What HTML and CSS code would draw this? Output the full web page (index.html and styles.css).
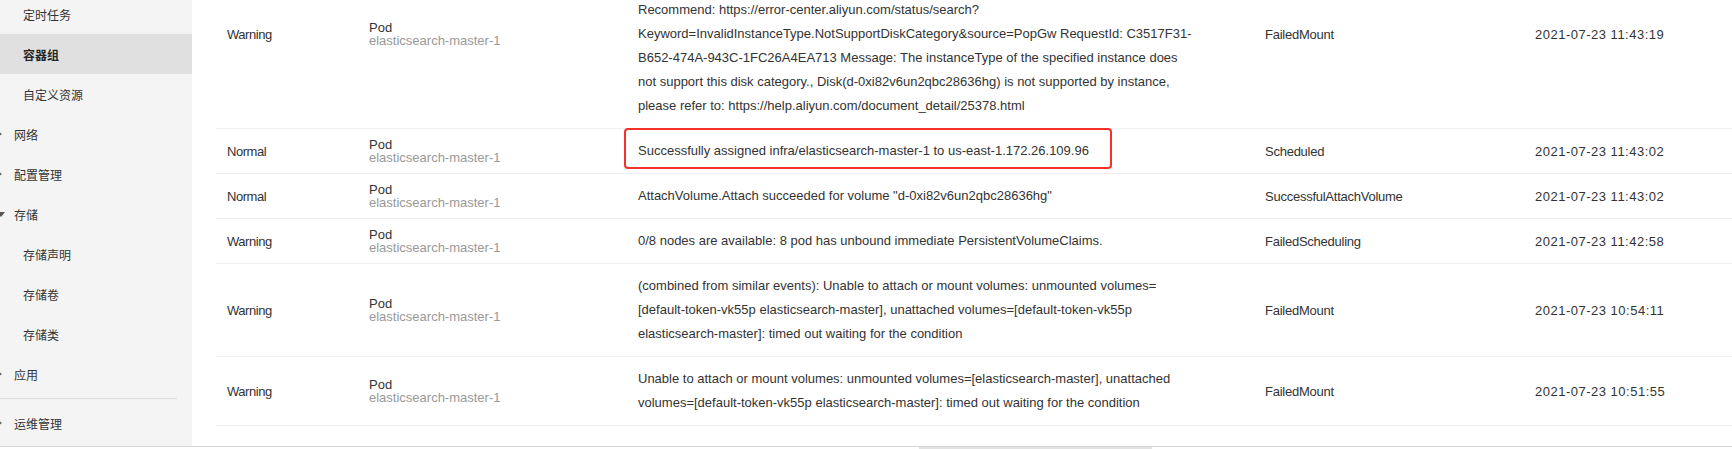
FILE: index.html
```html
<!DOCTYPE html>
<html lang="zh-CN">
<head>
<meta charset="utf-8">
<title>容器组 - 事件</title>
<link rel="stylesheet" href="styles.css">
</head>
<body>
<div class="app">
  <aside class="sidebar">
    <ul class="nav">
      <li class="nav-item sub">定时任务</li>
      <li class="nav-item sub active">容器组</li>
      <li class="nav-item sub">自定义资源</li>
      <li class="nav-item top"><span class="caret-right"></span>网络</li>
      <li class="nav-item top"><span class="caret-right"></span>配置管理</li>
      <li class="nav-item top"><span class="caret-down"></span>存储</li>
      <li class="nav-item sub">存储声明</li>
      <li class="nav-item sub">存储卷</li>
      <li class="nav-item sub">存储类</li>
      <li class="nav-item top"><span class="caret-right"></span>应用</li>
      <li class="nav-divider"></li>
      <li class="nav-item top"><span class="caret-right"></span>运维管理</li>
    </ul>
  </aside>
  <main class="main">
    <table class="events">
      <colgroup>
        <col class="c-type"><col class="c-obj"><col class="c-msg"><col class="c-reason"><col class="c-time">
      </colgroup>
      <tbody>
        <tr>
          <td class="type">Warning</td>
          <td class="obj"><div class="kind">Pod</div><div class="name">elasticsearch-master-1</div></td>
          <td class="msg scrolled">Recommend: https://error-center.aliyun.com/status/search?<br>Keyword=InvalidInstanceType.NotSupportDiskCategory&amp;source=PopGw RequestId: C3517F31-<br>B652-474A-943C-1FC26A4EA713 Message: The instanceType of the specified instance does<br>not support this disk category., Disk(d-0xi82v6un2qbc28636hg) is not supported by instance,<br>please refer to: https://help.aliyun.com/document_detail/25378.html</td>
          <td class="reason">FailedMount</td>
          <td class="time">2021-07-23 11:43:19</td>
        </tr>
        <tr>
          <td class="type">Normal</td>
          <td class="obj"><div class="kind">Pod</div><div class="name">elasticsearch-master-1</div></td>
          <td class="msg highlighted">Successfully assigned infra/elasticsearch-master-1 to us-east-1.172.26.109.96<span class="mark"></span></td>
          <td class="reason">Scheduled</td>
          <td class="time">2021-07-23 11:43:02</td>
        </tr>
        <tr>
          <td class="type">Normal</td>
          <td class="obj"><div class="kind">Pod</div><div class="name">elasticsearch-master-1</div></td>
          <td class="msg">AttachVolume.Attach succeeded for volume "d-0xi82v6un2qbc28636hg"</td>
          <td class="reason">SuccessfulAttachVolume</td>
          <td class="time">2021-07-23 11:43:02</td>
        </tr>
        <tr>
          <td class="type">Warning</td>
          <td class="obj"><div class="kind">Pod</div><div class="name">elasticsearch-master-1</div></td>
          <td class="msg">0/8 nodes are available: 8 pod has unbound immediate PersistentVolumeClaims.</td>
          <td class="reason">FailedScheduling</td>
          <td class="time">2021-07-23 11:42:58</td>
        </tr>
        <tr>
          <td class="type">Warning</td>
          <td class="obj"><div class="kind">Pod</div><div class="name">elasticsearch-master-1</div></td>
          <td class="msg">(combined from similar events): Unable to attach or mount volumes: unmounted volumes=<br>[default-token-vk55p elasticsearch-master], unattached volumes=[default-token-vk55p<br>elasticsearch-master]: timed out waiting for the condition</td>
          <td class="reason">FailedMount</td>
          <td class="time">2021-07-23 10:54:11</td>
        </tr>
        <tr>
          <td class="type">Warning</td>
          <td class="obj"><div class="kind">Pod</div><div class="name">elasticsearch-master-1</div></td>
          <td class="msg">Unable to attach or mount volumes: unmounted volumes=[elasticsearch-master], unattached<br>volumes=[default-token-vk55p elasticsearch-master]: timed out waiting for the condition</td>
          <td class="reason">FailedMount</td>
          <td class="time">2021-07-23 10:51:55</td>
        </tr>
      </tbody>
    </table>
  </main>
</div>
<div class="hscroll"><div class="thumb"></div></div>
</body>
</html>
```
FILE: styles.css
```css
html, body {
  margin: 0;
  padding: 0;
  background: #ffffff;
}
body {
  width: 1732px;
  height: 449px;
  overflow: hidden;
  font-family: "Liberation Sans", "Noto Sans CJK SC", sans-serif;
  color: #333333;
}
.app {
  display: flex;
  height: 446px;
  border-bottom: 1px solid #d6d6d6;
  overflow: hidden;
}
.sidebar {
  width: 192px;
  flex: 0 0 192px;
  background: #f4f4f4;
  overflow: hidden;
}
.nav {
  list-style: none;
  margin: -6px 0 0 0;
  padding: 0;
}
.nav-item {
  height: 40px;
  display: flex;
  align-items: center;
  font-family: "Noto Sans CJK SC", sans-serif;
  font-size: 12px;
  color: #333333;
}
.nav-item.sub {
  padding-left: 23px;
}
.nav-item.top {
  padding-left: 0;
}
.nav-item.active {
  background: #e0e0e0;
  font-weight: 700;
  color: #262626;
}
.caret-right {
  width: 0;
  height: 0;
  border-left: 4px solid #666666;
  border-top: 3px solid transparent;
  border-bottom: 3px solid transparent;
  margin-left: -2px;
  margin-right: 12px;
}
.caret-down {
  width: 0;
  height: 0;
  border-top: 5px solid #555555;
  border-left: 4px solid transparent;
  border-right: 4px solid transparent;
  margin-left: -3px;
  margin-right: 9px;
}
.nav-divider {
  height: 1px;
  background: #dcdcdc;
  margin: 4px 15px 4px 0;
}
.main {
  flex: 1;
  overflow: hidden;
  padding-left: 24px;
}
.events {
  border-collapse: collapse;
  table-layout: fixed;
  width: 1516px;
  margin-top: -60px;
  font-size: 13px;
}
.c-type { width: 142px; }
.c-obj { width: 269px; }
.c-msg { width: 627px; }
.c-reason { width: 270px; }
.c-time { width: 208px; }
.events td {
  border-bottom: 1px solid #efefef;
  padding: 0 11px;
  vertical-align: middle;
  color: #333333;
  white-space: nowrap;
}
.events td.msg {
  padding: 10px 11px;
  line-height: 24px;
}
/* first row is partly scrolled out of view above the viewport */
.events td.msg.scrolled {
  padding-top: 58px;
}
.type {
  letter-spacing: -0.45px;
}
.obj .kind {
  line-height: 13px;
  color: #333333;
}
.obj .name {
  line-height: 13px;
  color: #999999;
}
.reason {
  letter-spacing: -0.25px;
}
.time {
  letter-spacing: 0.5px;
}
.highlighted {
  position: relative;
}
.mark {
  position: absolute;
  left: -3px;
  top: -1px;
  width: 488px;
  height: 41px;
  box-sizing: border-box;
  border: 2px solid #f5302a;
  border-radius: 4px;
}
.hscroll {
  height: 2px;
  padding-left: 919px;
}
.thumb {
  width: 233px;
  height: 2px;
  background: #e2e2e2;
}
```
